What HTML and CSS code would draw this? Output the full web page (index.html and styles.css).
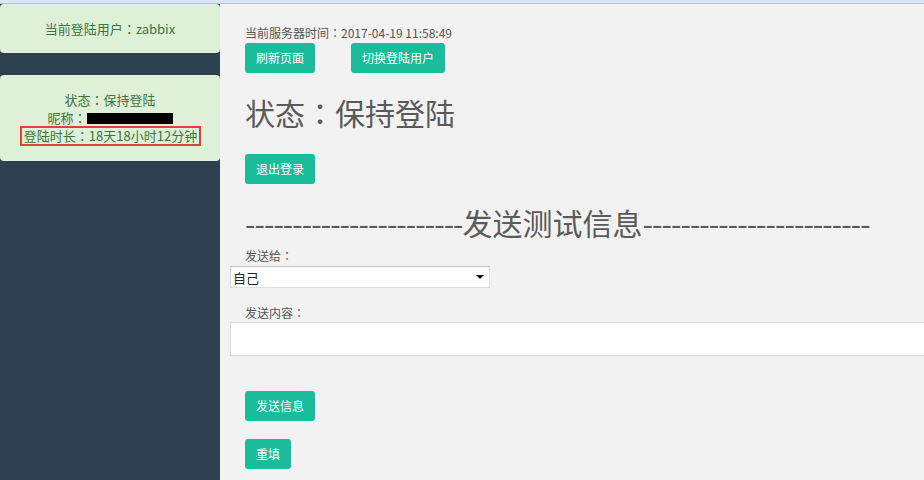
FILE: index.html
```html
<!DOCTYPE html>
<html lang="zh-CN">
<head>
<meta charset="utf-8">
<title>发送测试信息</title>
<link rel="stylesheet" href="styles.css">
</head>
<body>
<div class="topstrip"></div>
<div class="layout">
  <aside class="sidebar">
    <div class="card card-user">当前登陆用户<span class="colon" lang="zh-TW">：</span>zabbix</div>
    <div class="card card-status">
      <div class="line">状态<span class="colon" lang="zh-TW">：</span>保持登陆</div>
      <div class="line">昵称<span class="colon" lang="zh-TW">：</span><span class="redact"></span></div>
      <div class="line boxed">登陆时长<span class="colon" lang="zh-TW">：</span>18天18小时12分钟</div>
    </div>
  </aside>
  <main class="main">
    <div class="server-time">当前服务器时间<span class="colon" lang="zh-TW">：</span>2017-04-19 11:58:49</div>
    <div class="btn-row">
      <button class="btn">刷新页面</button>
      <button class="btn">切换登陆用户</button>
    </div>
    <h2 class="status-title">状态<span class="colon" lang="zh-TW">：</span>保持登陆</h2>
    <button class="btn btn-logout">退出登录</button>
    <h2 class="section-title"><span class="dashes">-----------------------</span>发送测试信息<span class="dashes">------------------------</span></h2>
    <div class="label">发送给<span class="colon" lang="zh-TW">：</span></div>
    <div class="select">
      <span>自己</span>
      <span class="arrow"></span>
    </div>
    <div class="label label-content">发送内容<span class="colon" lang="zh-TW">：</span></div>
    <div class="textarea"></div>
    <button class="btn btn-send">发送信息</button>
    <button class="btn btn-reset">重填</button>
  </main>
</div>
</body>
</html>
```
FILE: styles.css
```css
html, body {
  margin: 0;
  padding: 0;
  height: 100%;
  overflow: hidden;
}
body {
  font-family: "Noto Sans CJK SC", "Noto Sans", sans-serif;
  background: #f2f2f2;
  color: #555;
}
.colon {
  font-family: "Noto Sans CJK TC", "Noto Sans CJK JP", sans-serif;
}
.topstrip {
  height: 3px;
  background: #d8e5f3;
  border-bottom: 1px solid #b1c2d8;
}
.layout {
  display: flex;
  height: calc(100% - 4px);
}
.sidebar {
  width: 220px;
  flex: none;
  background: #2e3f4f;
  display: flex;
  flex-direction: column;
  gap: 22px;
}
.card {
  background: #dff0d8;
  color: #3c763d;
  border-radius: 4px;
  font-size: 13px;
  text-align: center;
}
.card-user {
  height: 49px;
  line-height: 50px;
}
.card-status {
  padding: 16px 0 15px;
  line-height: 18px;
}
.card-status .line {
  height: 17px;
}
.card-status .line:first-child {
  height: 18px;
}
.redact {
  display: inline-block;
  width: 86px;
  height: 11px;
  background: #000;
  vertical-align: -1px;
}
.boxed.line {
  height: 16px;
  line-height: 16px;
  margin: 0 19px 0 20px;
  border: 2px solid #e0403c;
}
.main {
  flex: 1;
  padding: 21px 0 0 25px;
  display: flex;
  flex-direction: column;
  align-items: flex-start;
}
.server-time {
  font-size: 12px;
  line-height: 16px;
}
.btn {
  font-family: inherit;
  font-size: 12px;
  color: #fff;
  background: #1abc9c;
  border: none;
  border-radius: 3px;
  height: 30px;
  padding: 0 11px;
  line-height: 30px;
  cursor: pointer;
}
.btn-row {
  display: flex;
  gap: 36px;
  margin-top: 2px;
}
.status-title {
  margin: 21px 0 0;
  font-size: 30px;
  font-weight: normal;
  line-height: 36px;
  color: #5a5a5a;
}
.btn-logout {
  margin-top: 24px;
}
.section-title {
  margin: 20px 0 0;
  font-size: 30px;
  font-weight: normal;
  line-height: 36px;
  color: #5a5a5a;
  white-space: nowrap;
}
.dashes {
  letter-spacing: -0.95px;
}
.label {
  margin-top: 8px;
  font-size: 12px;
  line-height: 16px;
}
.select {
  margin: 2px 0 0 -15px;
  box-sizing: border-box;
  width: 260px;
  height: 22px;
  background: #fff;
  border: 1px solid #c9c9c9;
  border-color: #bdbdbd #e0e0e0 #e0e0e0 #d0d0d0;
  display: flex;
  align-items: center;
  justify-content: space-between;
  padding: 0 5px 0 2px;
  font-size: 13px;
  color: #222;
}
.arrow {
  width: 0;
  height: 0;
  border-left: 4px solid transparent;
  border-right: 4px solid transparent;
  border-top: 4px solid #111;
}
.label-content {
  margin-top: 17px;
}
.textarea {
  margin: 1px 0 0 -15px;
  align-self: stretch;
  height: 32px;
  background: #fff;
  border: 1px solid #dcdcdc;
  border-right: none;
}
.btn-send {
  margin-top: 35px;
}
.btn-reset {
  margin-top: 18px;
}
```
